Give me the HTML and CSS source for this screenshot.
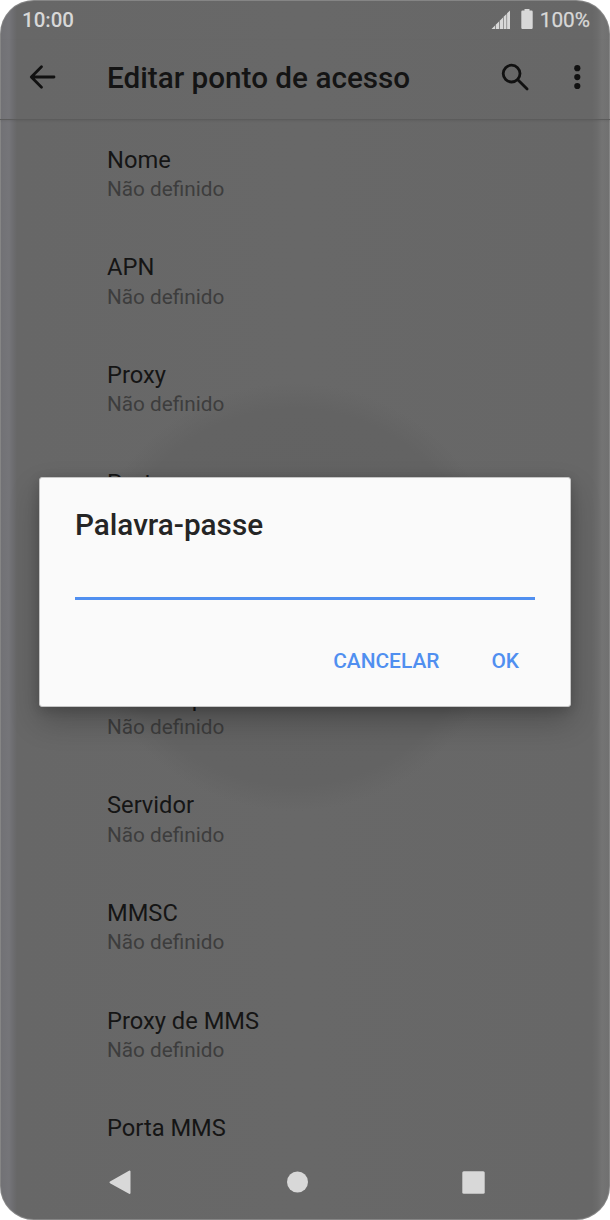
FILE: index.html
```html
<!DOCTYPE html>
<html lang="pt">
<head>
<meta charset="utf-8">
<title>Editar ponto de acesso</title>
<link rel="stylesheet" href="styles.css">
</head>
<body>
<div class="phone">
  <header class="status">
    <span class="clock">10:00</span>
    <svg class="signal" width="20" height="20" viewBox="0 0 20 20"><path d="M.5 19 4 15.500V19zM4.700 19v-4.200l3.300-3.300V19zM8.700 19v-8.200L12 7.500V19zM12.600 19V6.800l2.900-2.900V19zM16.100 19V3.300L19 .5V19z"/></svg>
    <svg class="battery" width="12" height="20" viewBox="0 0 12 20"><path d="M3.500 0h5v1.500H10.500a1.200 1.200 0 0 1 1.200 1.200v16a1.200 1.200 0 0 1-1.200 1.200h-9a1.200 1.200 0 0 1-1.200-1.200V2.700a1.200 1.200 0 0 1 1.200-1.200h2z"/></svg>
    <span class="percent">100%</span>
  </header>
  <div class="toolbar">
    <svg class="back" width="36" height="36" viewBox="0 0 36 36"><path d="M30 18H7.500M17.500 7.800 7.300 18l10.200 10.200"/></svg>
    <h1 class="title">Editar ponto de acesso</h1>
    <svg class="search" width="36" height="36" viewBox="0 0 36 36"><circle cx="14.600" cy="14.600" r="8.400"/><path d="m20.800 20.800 9.300 9.300"/></svg>
    <svg class="more" width="36" height="36" viewBox="0 0 36 36"><circle cx="18.300" cy="9.200" r="3.100"/><circle cx="18.300" cy="18.100" r="3.100"/><circle cx="18.300" cy="27" r="3.100"/></svg>
  </div>
  <main class="list">
    <div class="row"><div class="name">Nome</div><div class="value">Não definido</div></div>
    <div class="row"><div class="name">APN</div><div class="value">Não definido</div></div>
    <div class="row"><div class="name">Proxy</div><div class="value">Não definido</div></div>
    <div class="row"><div class="name">Porta</div></div>
    <div class="row"></div>
    <div class="row"><div class="name">Palavra-passe</div><div class="value">Não definido</div></div>
    <div class="row"><div class="name">Servidor</div><div class="value">Não definido</div></div>
    <div class="row"><div class="name">MMSC</div><div class="value">Não definido</div></div>
    <div class="row"><div class="name">Proxy de MMS</div><div class="value">Não definido</div></div>
    <div class="row"><div class="name">Porta MMS</div></div>
  </main>
  <nav class="nav">
    <svg width="24" height="26" viewBox="0 0 24 26"><path class="triangle" d="M2.500 13.300 21.500 2.500v21.500z"/></svg>
    <svg width="22" height="22" viewBox="0 0 22 22"><circle cx="11.500" cy="11" r="10.500"/></svg>
    <svg width="23" height="23" viewBox="0 0 23 23"><rect x=".3" y=".3" width="22.400" height="22.400" rx="1.500"/></svg>
  </nav>
  <section class="dialog">
    <h2 class="dialog-title">Palavra-passe</h2>
    <div class="input"></div>
    <div class="actions"><span>CANCELAR</span><span>OK</span></div>
  </section>
</div>
</body>
</html>
```
FILE: styles.css
```css
body { margin: 0; background: #fff; font-family: Roboto, sans-serif; }
.phone {
  position: relative; box-sizing: border-box; width: 610px; height: 1220px;
  overflow: hidden; display: flex; flex-direction: column; border-radius: 34px;
  box-shadow: inset 0 0 0 1px #858585;
  background: radial-gradient(circle 214px at 294px 597px, #626262 0, #636363 88%, transparent 100%),
    linear-gradient(90deg, #717175 0, #757579 9px, #6d6d70 13px, #676767 17px, #686868 300px, #676767 592px, #6b6b6b 597px, #747474 602px, #707070 100%);
}
.status { flex: none; height: 40px; box-sizing: border-box; padding: 0 20px 0 22px; display: flex; align-items: center; color: #d8d8d8; fill: #d8d8d8; font-size: 20.500px; font-weight: 500; }
.percent { font-weight: 400; -webkit-text-stroke: .25px #d8d8d8; font-size: 20.800px; }
.signal { margin-left: auto; }
.battery { margin: 0 7px 2px 10px; }
.toolbar { flex: none; height: 80px; box-sizing: border-box; padding: 0 14px 5px 24px; display: flex; align-items: center; fill: #111; border-bottom: 1px solid #5c5c5c; box-shadow: 0 1px 2px rgba(0,0,0,.08); }
.back, .search { fill: none; stroke: #111; stroke-width: 2.800px; stroke-linecap: round; stroke-linejoin: round; }
.title { margin: 0 0 0 47px; color: #141414; font-size: 29.700px; font-weight: 500; white-space: nowrap; }
.search { margin-left: auto; }
.more { margin-left: 26px; margin-right: 1px; }
.list { flex: none; height: 1026px; overflow: hidden; padding: 23.750px 0 0 107px; box-sizing: border-box; }
.row { height: 107.600px; }
.name { height: 31.500px; line-height: 32px; font-size: 23.700px; color: #151515; }
.value { height: 28px; line-height: 28px; font-size: 20.750px; color: #3d3d3d; }
.nav { height: 72px; display: flex; align-items: center; fill: #d8d8d8; padding: 0 125px 0 108px; justify-content: space-between; }
.triangle { stroke: #d8d8d8; stroke-width: 2px; stroke-linejoin: round; }
.dialog { position: absolute; left: 39px; top: 477px; width: 532px; height: 230px; box-sizing: border-box; padding: 28px 35px 0; background: #fafafa; border: 1px solid #c5c5c5; border-radius: 3px; box-shadow: 0 14px 30px rgba(0,0,0,.24), 0 3px 12px rgba(0,0,0,.16); }
.dialog-title { margin: 0; font-size: 29.700px; line-height: 38px; font-weight: 500; color: #252525; }
.input { height: 56px; box-sizing: border-box; border-bottom: 3px solid #508ff0; }
.actions { display: flex; justify-content: flex-end; gap: 52px; padding: 46px 16px 0 0; font-size: 20.900px; line-height: 30px; font-weight: 500; color: #508ff0; }
```
